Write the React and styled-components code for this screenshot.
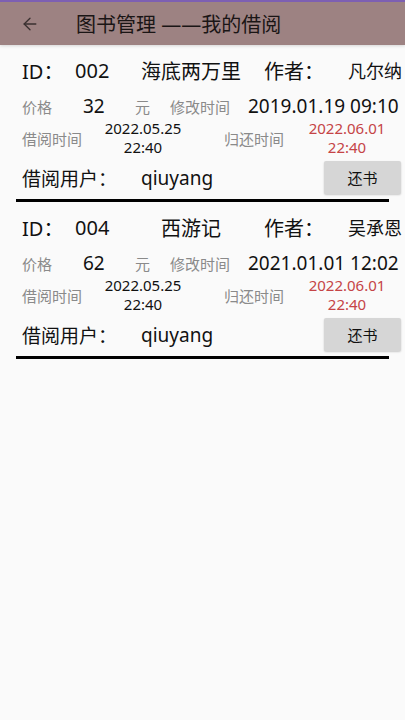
import React from 'react'
import styled, { createGlobalStyle } from 'styled-components'
import { ArrowLeft } from 'lucide-react'

const GlobalStyle = createGlobalStyle`
  html, body {
    margin: 0;
    padding: 0;
    background: #fafafa;
    font-family: "Noto Sans", "Noto Sans CJK SC", sans-serif;
  }
`

const Page = styled.div`
  width: 405px;
  min-height: 720px;
  background: #fafafa;
  overflow: hidden;
`

const TopBar = styled.div`
  height: 43px;
  border-top: 2px solid #7d5fb2;
  background: #9d8282;
  display: flex;
  align-items: center;
  box-shadow: 0 1px 3px rgba(0, 0, 0, 0.15);
`

const Back = styled.div`
  width: 76px;
  padding-left: 20px;
  box-sizing: border-box;
  display: flex;
  align-items: center;
  color: #3a3030;
`

const Title = styled.div`
  font-size: 20px;
  color: #1a1515;
  white-space: nowrap;
`

const Card = styled.div`
  padding-top: 10px;
`

const Row = styled.div`
  display: flex;
  align-items: center;
  height: ${p => p.h}px;
  margin-top: ${p => p.mt || 0}px;
  padding-left: 22px;
  white-space: nowrap;
`

const Cell = styled.div`
  width: ${p => (p.w ? p.w + 'px' : 'auto')};
  flex: none;
  font-size: ${p => p.size || 15}px;
  color: ${p => p.color || '#111'};
  text-align: ${p => (p.center ? 'center' : 'left')};
`

const DateStack = styled.div`
  width: 86px;
  flex: none;
  display: flex;
  flex-direction: column;
  align-items: center;
  font-size: 15px;
  line-height: 19px;
  color: ${p => p.color || '#111'};
`

const Spacer = styled.div`
  flex: 1;
`

const ReturnButton = styled.button`
  width: 77px;
  height: 33px;
  margin-right: 4px;
  border: none;
  border-radius: 2px;
  background: #d6d6d6;
  box-shadow: 0 1px 2px rgba(0, 0, 0, 0.2);
  font-family: inherit;
  font-size: 15px;
  color: #111;
  cursor: pointer;
`

const Divider = styled.div`
  margin: 5px 0 0 16px;
  width: 373px;
  height: 3px;
  background: #000;
`

const GRAY = '#8a8a8a'
const RED = '#c54446'

const loans = [
  { id: '002', name: '海底两万里', author: '凡尔纳', price: '32', modified: '2019.01.19 09:10' },
  { id: '004', name: '西游记', author: '吴承恩', price: '62', modified: '2021.01.01 12:02' }
]

function LoanCard({ loan }) {
  return (
    <Card>
      <Row h={30}>
        <Cell w={53} size={20}>ID：</Cell>
        <Cell w={55} size={20}>{loan.id}</Cell>
        <Cell w={122} size={20} center>{loan.name}</Cell>
        <Cell w={12} />
        <Cell w={84} size={20}>作者：</Cell>
        <Cell size={18}>{loan.author}</Cell>
      </Row>
      <Row h={26} mt={8}>
        <Cell w={61} color={GRAY}>价格</Cell>
        <Cell w={52} size={19}>{loan.price}</Cell>
        <Cell w={35} color={GRAY}>元</Cell>
        <Cell w={78} color={GRAY}>修改时间</Cell>
        <Cell size={19}>{loan.modified}</Cell>
      </Row>
      <Row h={38}>
        <Cell w={78} color={GRAY}>借阅时间</Cell>
        <DateStack>
          <span>2022.05.25</span>
          <span>22:40</span>
        </DateStack>
        <Cell w={38} />
        <Cell w={80} color={GRAY}>归还时间</Cell>
        <DateStack color={RED}>
          <span>2022.06.01</span>
          <span>22:40</span>
        </DateStack>
      </Row>
      <Row h={33} mt={4}>
        <Cell w={119} size={19}>借阅用户：</Cell>
        <Cell size={19}>qiuyang</Cell>
        <Spacer />
        <ReturnButton type='button'>还书</ReturnButton>
      </Row>
      <Divider />
    </Card>
  )
}

export default function App() {
  return (
    <Page>
      <GlobalStyle />
      <TopBar>
        <Back><ArrowLeft size={20} strokeWidth={1.6} /></Back>
        <Title>图书管理 ——我的借阅</Title>
      </TopBar>
      {loans.map(loan => <LoanCard key={loan.id} loan={loan} />)}
    </Page>
  )
}
